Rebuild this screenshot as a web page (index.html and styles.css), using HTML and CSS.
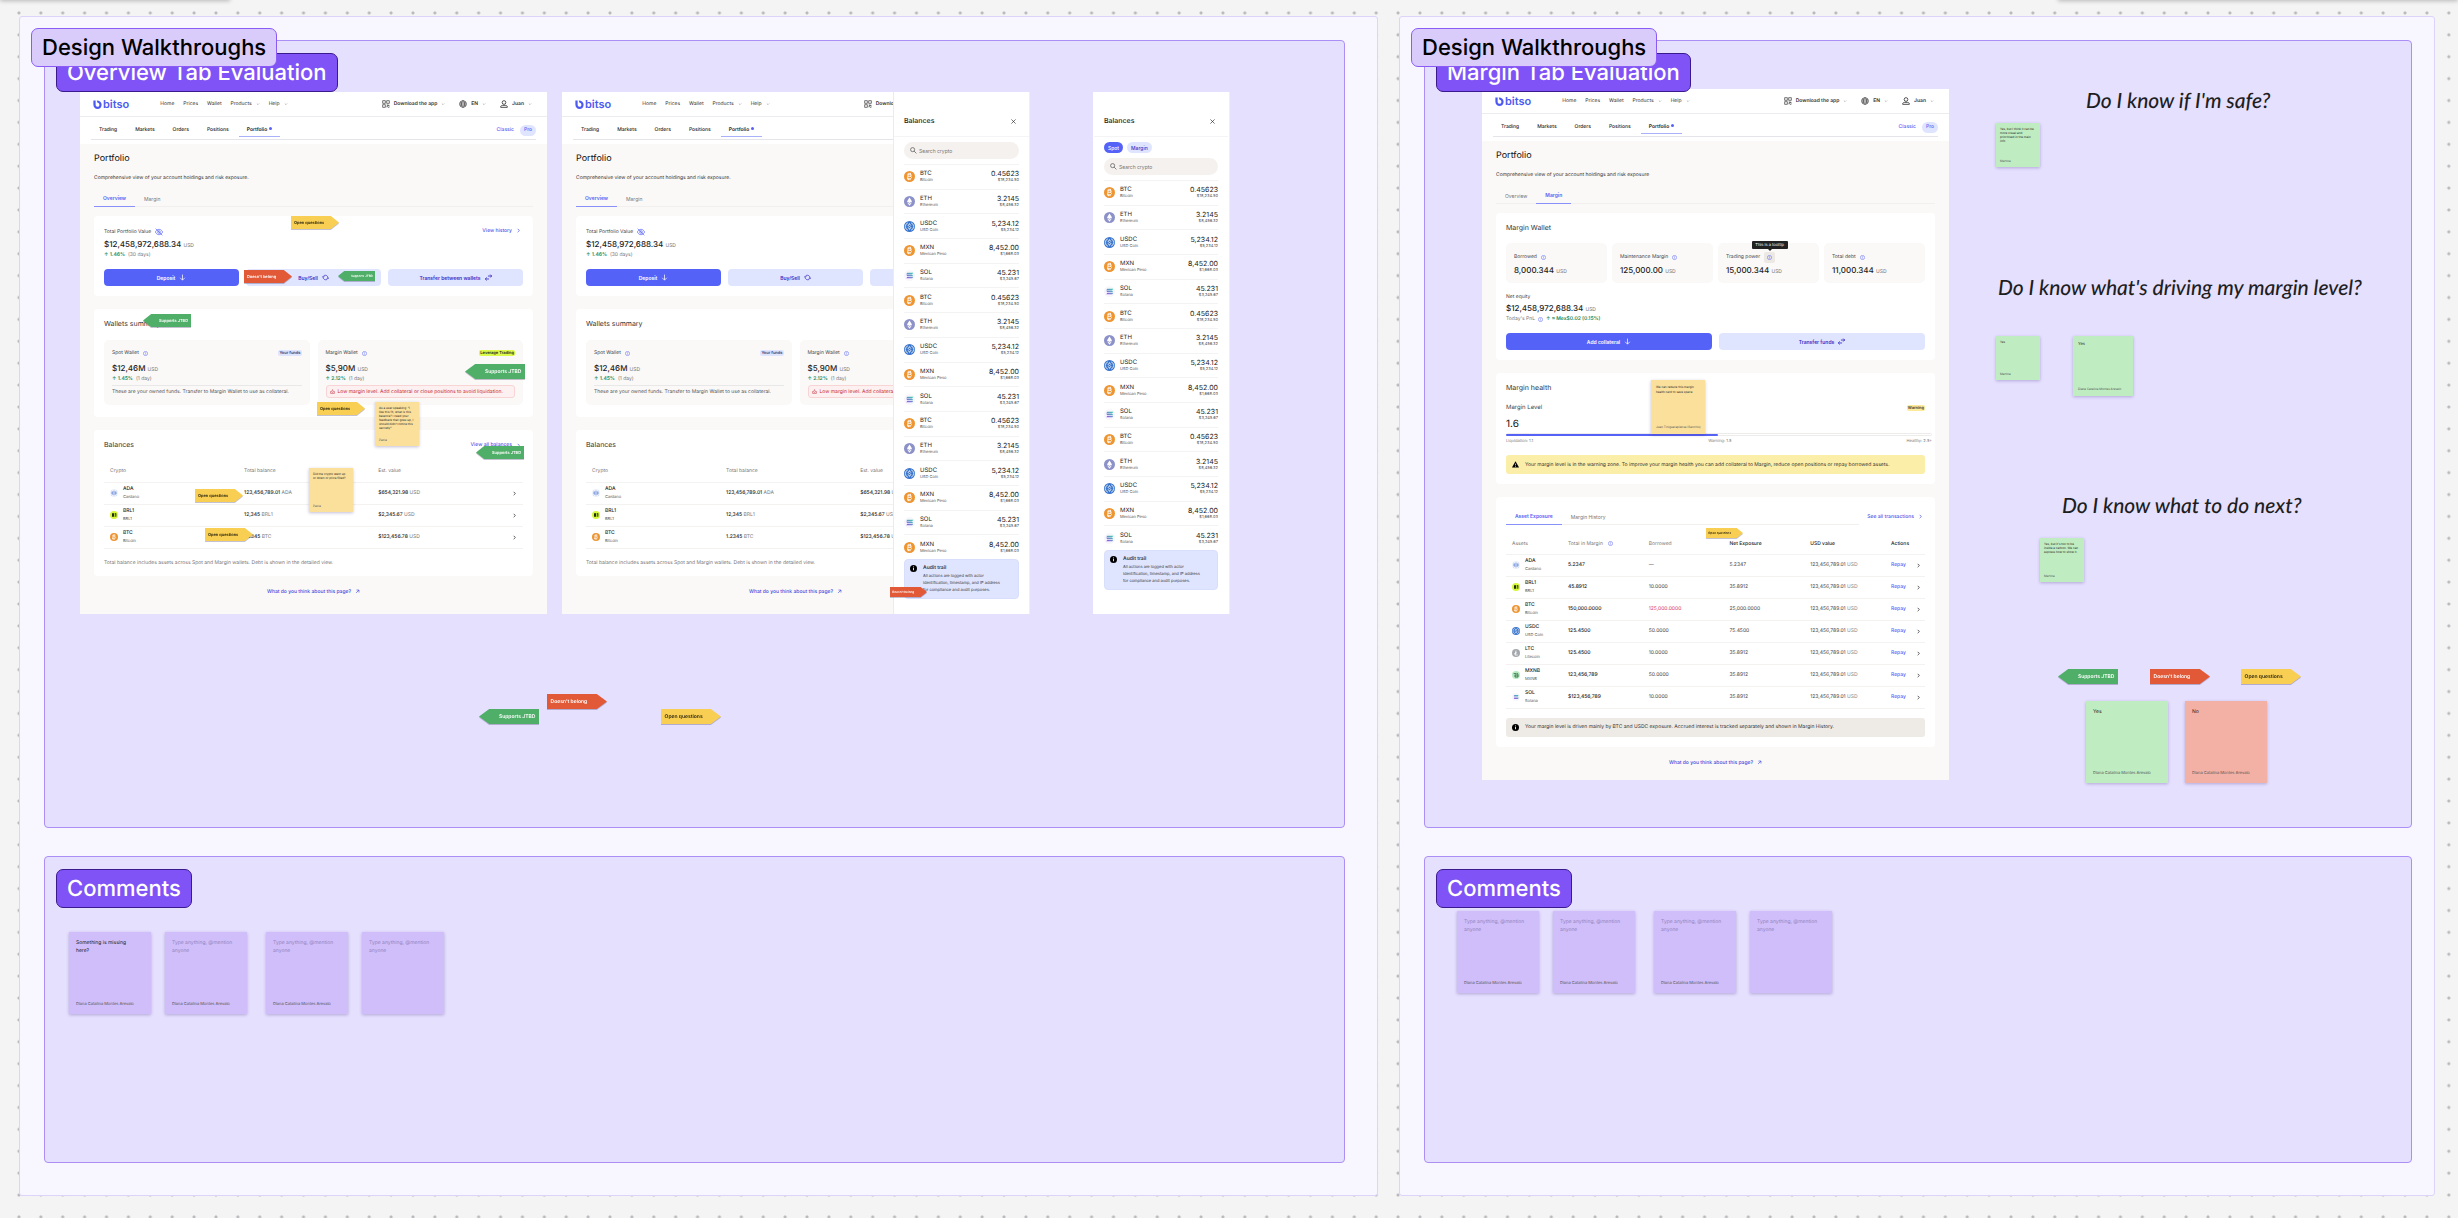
FILE: index.html
```html
<!DOCTYPE html>
<html lang="en">
<head>
    <meta charset="UTF-8">
    <meta name="viewport" content="width=device-width, initial-scale=1.0">
    <title>Design Walkthroughs</title>
    <link rel="stylesheet" href="styles.css">
</head>
<body>

    <!-- Icons -->
    <svg class="sprite" aria-hidden="true">
        <linearGradient id="solFill" x1="0" y1="1" x2="1" y2="0">
            <stop offset="0" stop-color="#a04bf0"/>
            <stop offset="1" stop-color="#35d6a5"/>
        </linearGradient>
        <symbol id="logo" viewBox="0 0 24 24">
            <path d="M1 1h6v11c0 4 2 6 5 6s5-2 5-5.500-2-5.500-5-5.500L10 1c8 0 13 4.500 13 11.500S18 24 12 24 1 19.500 1 12z" fill="#4c5af2"/>
        </symbol>
        <symbol id="qr" viewBox="0 0 24 24">
            <path d="M2 2h8v8H2zM14 2h8v8h-8zM2 14h8v8H2zM14 15h4v3h-3v4M20 14v4h3M18 22h4" fill="none" stroke="currentColor" stroke-width="2"/>
        </symbol>
        <symbol id="globe" viewBox="0 0 24 24">
            <g fill="none" stroke="currentColor" stroke-width="2"><circle cx="12" cy="12" r="10"/><ellipse cx="12" cy="12" rx="4.500" ry="10"/><path d="M2 9h20M2 15h20"/></g>
        </symbol>
        <symbol id="user" viewBox="0 0 24 24">
            <path d="M12 2a5 5 0 1 1 0 11 5 5 0 0 1 0-11zM2 22v-2c0-3 4-4 10-4s10 1 10 4v2z" fill="none" stroke="currentColor" stroke-width="2.500"/>
        </symbol>
        <symbol id="down" viewBox="0 0 24 24">
            <path d="M5 9l7 7 7-7" fill="none" stroke="currentColor" stroke-width="3"/>
        </symbol>
        <symbol id="right" viewBox="0 0 24 24">
            <path d="M8 4l8 8-8 8" fill="none" stroke="currentColor" stroke-width="3.500"/>
        </symbol>
        <symbol id="eye" viewBox="0 0 24 24">
            <path d="M1 12c3-6 7-8 11-8s8 2 11 8c-3 6-7 8-11 8S4 18 1 12zM12 8a4 4 0 1 1 0 8 4 4 0 0 1 0-8zM2 2l20 20" fill="none" stroke="currentColor" stroke-width="2"/>
        </symbol>
        <symbol id="info" viewBox="0 0 24 24">
            <path d="M12 2a10 10 0 1 1 0 20 10 10 0 0 1 0-20zM12 11v6M12 6v3" fill="none" stroke="currentColor" stroke-width="2.500"/>
        </symbol>
        <symbol id="info-solid" viewBox="0 0 24 24">
            <circle cx="12" cy="12" r="12"/><path d="M12 10v8M12 5v3" stroke="#fff" stroke-width="3"/>
        </symbol>
        <symbol id="warn-solid" viewBox="0 0 24 24">
            <path d="M12 1l12 21H0z"/><path d="M12 9v6M12 17v3" stroke="#fbeea8" stroke-width="2.500"/>
        </symbol>
        <symbol id="alert" viewBox="0 0 24 24">
            <path d="M3 21V12h4c0-7 10-7 10 0h4v9zM12 1v3M12 13v5" fill="none" stroke="currentColor" stroke-width="2.500"/>
        </symbol>
        <symbol id="arrow-down" viewBox="0 0 24 24">
            <path d="M12 2v19M4 13l8 8 8-8" fill="none" stroke="currentColor" stroke-width="2.500"/>
        </symbol>
        <symbol id="arrow-out" viewBox="0 0 24 24">
            <path d="M5 19L19 5M7 5h12v12" fill="none" stroke="currentColor" stroke-width="3"/>
        </symbol>
        <symbol id="cycle" viewBox="0 0 24 24">
            <path d="M4 11c0-9 14-9 16 0M20 13c0 9-14 9-16 0M0 8l4 4 4-4M16 16l4-4 4 4" fill="none" stroke="currentColor" stroke-width="2.500"/>
        </symbol>
        <symbol id="swap" viewBox="0 0 24 24">
            <path d="M10 7h13M18 2l5 5-5 5M14 17H1M6 12l-5 5 5 5" fill="none" stroke="currentColor" stroke-width="3"/>
        </symbol>
        <symbol id="search" viewBox="0 0 24 24">
            <path d="M9 2a7 7 0 1 1 0 14A7 7 0 0 1 9 2zM14 14l8 8" fill="none" stroke="currentColor" stroke-width="2.500"/>
        </symbol>
        <symbol id="close" viewBox="0 0 24 24">
            <path d="M2 2l20 20M22 2L2 22" fill="none" stroke="currentColor" stroke-width="3"/>
        </symbol>
        <symbol id="btc" viewBox="0 0 24 24">
            <circle cx="12" cy="12" r="12" fill="#ee9430"/>
            <path d="M9 6l-1 12M8 7h5c4 0 4 4 0 4.500H9M13 11.500c5 0 4 5.500 0 5.500H7M11 4v3M14 4v3M10 17v3M13 17v3" fill="none" stroke="#fff" stroke-width="2"/>
        </symbol>
        <symbol id="eth" viewBox="0 0 24 24">
            <circle cx="12" cy="12" r="12" fill="#8c92c9"/>
            <path d="M12 3l5.500 9L12 15.500 6.500 12zM12 17l5.500-3.500L12 21l-5.500-7.500z" fill="#fff"/>
        </symbol>
        <symbol id="usdc" viewBox="0 0 24 24">
            <circle cx="12" cy="12" r="12" fill="#3b76cc"/>
            <path d="M8.500 4a8.500 8.500 0 0 0 0 16M15.500 4a8.500 8.500 0 0 1 0 16M15 10c0-3.500-6-3.500-6-.5s6 2 6 5-6 3-6-.5M12 5v2M12 17v2" fill="none" stroke="#fff" stroke-width="1.600"/>
        </symbol>
        <symbol id="sol" viewBox="0 0 24 24">
            <circle cx="12" cy="12" r="12" fill="#f7f7fb"/>
            <path d="M7 6h13l-2 3H5zM5 10.500h13l2 3H7zM7 15h13l-2 3H5z" fill="url(#solFill)"/>
        </symbol>
        <symbol id="ada" viewBox="0 0 24 24">
            <circle cx="12" cy="12" r="12" fill="#eef3fc"/>
            <g fill="#4a72cf"><circle cx="9" cy="9" r="2"/><circle cx="15" cy="9" r="2"/><circle cx="9" cy="15" r="2"/><circle cx="15" cy="15" r="2"/><circle cx="6" cy="12" r="2"/><circle cx="18" cy="12" r="2"/><circle cx="12" cy="3.500" r="1"/><circle cx="12" cy="20.500" r="1"/><circle cx="5" cy="6" r="1"/><circle cx="19" cy="6" r="1"/><circle cx="5" cy="18" r="1"/><circle cx="19" cy="18" r="1"/></g>
        </symbol>
        <symbol id="brl1" viewBox="0 0 24 24">
            <circle cx="12" cy="12" r="12" fill="#d6f838"/>
            <path d="M6 7h7v3l-1 2 1 2v3H6zM15 7h4v10h-3V10h-1z" fill="#1d2b10"/>
        </symbol>
        <symbol id="ltc" viewBox="0 0 24 24">
            <circle cx="12" cy="12" r="12" fill="#a5a8ad"/>
            <path d="M12 5l-3 13h8M7 14l8-3" fill="none" stroke="#fff" stroke-width="2.500"/>
        </symbol>
        <symbol id="mxnb" viewBox="0 0 24 24">
            <circle cx="12" cy="12" r="12" fill="#b7ecc0"/>
            <path d="M5 8h8M9 12h9v6H9zM14 7c3 0 4 1 4 4" fill="none" stroke="#2d5a3c" stroke-width="2.500"/>
        </symbol>
    </svg>

    <!-- Header shared by every mocked page -->
    <template id="headerTemplate">
        <header class="topbar">
            <a class="logo" href="#"><svg><use href="#logo"/></svg>bitso</a>
            <nav class="topnav">
                <a href="#">Home</a>
                <a href="#">Prices</a>
                <a href="#">Wallet</a>
                <a href="#">Products <svg class="ic-xs"><use href="#down"/></svg></a>
                <a href="#">Help <svg class="ic-xs"><use href="#down"/></svg></a>
            </nav>
            <div class="account">
                <a href="#"><svg class="ic-lg"><use href="#qr"/></svg>Download the app <svg class="ic-xs"><use href="#down"/></svg></a>
                <a href="#"><svg class="ic-lg"><use href="#globe"/></svg>EN <svg class="ic-xs"><use href="#down"/></svg></a>
                <a href="#"><svg class="ic-lg"><use href="#user"/></svg>Juan <svg class="ic-xs"><use href="#down"/></svg></a>
            </div>
        </header>
        <div class="subnav">
            <nav>
                <a href="#">Trading</a>
                <a href="#">Markets</a>
                <a href="#">Orders</a>
                <a href="#">Positions</a>
                <a href="#" class="current">Portfolio</a>
                <a href="#" class="mode">Classic</a>
                <a href="#" class="mode pill">Pro</a>
            </nav>
        </div>
    </template>

    <template id="overviewTemplate">
        <main class="content">
            <h1>Portfolio</h1>
            <p class="lead">Comprehensive view of your account holdings and risk exposure.</p>
            <div class="tabs">
                <button class="tab active">Overview</button>
                <button class="tab">Margin</button>
            </div>

            <section class="card total">
                <div class="row">
                    <span class="label">Total Portfolio Value <svg class="ic-lg blue"><use href="#eye"/></svg></span>
                    <a class="more" href="#">View history <svg class="ic-sm"><use href="#right"/></svg></a>
                </div>
                <p class="amount">$12,458,972,688.34 <small>USD</small></p>
                <p class="change"><b>↑ 1.46%</b> (30 days)</p>
                <div class="actions">
                    <button class="btn primary">Deposit <svg class="ic-md"><use href="#arrow-down"/></svg></button>
                    <button class="btn">Buy/Sell <svg class="ic-md"><use href="#cycle"/></svg></button>
                    <button class="btn">Transfer between wallets <svg class="ic-md"><use href="#swap"/></svg></button>
                </div>
            </section>

            <section class="card">
                <h2>Wallets summary</h2>
                <div class="wallets">
                    <div class="wallet">
                        <div class="row">
                            <span class="label">Spot Wallet <svg class="ic-sm blue"><use href="#info"/></svg></span>
                            <span class="chip">Your funds</span>
                        </div>
                        <p class="amount">$12,46M <small>USD</small></p>
                        <p class="change"><b>↑ 1.45%</b> (1 day)</p>
                        <p class="hint">These are your owned funds. Transfer to Margin Wallet to use as collateral.</p>
                    </div>
                    <div class="wallet">
                        <div class="row">
                            <span class="label">Margin Wallet <svg class="ic-sm blue"><use href="#info"/></svg></span>
                            <span class="chip lime">Leverage Trading</span>
                        </div>
                        <p class="amount">$5,90M <small>USD</small></p>
                        <p class="change"><b>↑ 2.12%</b> (1 day)</p>
                        <p class="danger"><svg class="ic-sm"><use href="#alert"/></svg>Low margin level. Add collateral or close positions to avoid liquidation.</p>
                    </div>
                </div>
            </section>

            <section class="card balances">
                <div class="row">
                    <h2>Balances</h2>
                    <a class="more" href="#">View all balances <svg class="ic-sm"><use href="#right"/></svg></a>
                </div>
                <table class="holdings">
                    <thead>
                        <tr><th>Crypto</th><th>Total balance</th><th>Est. value</th><th></th></tr>
                    </thead>
                    <tbody>
                        <tr>
                            <td><div class="asset"><svg><use href="#ada"/></svg><span>ADA<small>Cardano</small></span></div></td>
                            <td><b>123,456,789.01</b> ADA</td>
                            <td><b>$654,321.98</b> USD</td>
                            <td><svg class="ic-sm"><use href="#right"/></svg></td>
                        </tr>
                        <tr>
                            <td><div class="asset"><svg><use href="#brl1"/></svg><span>BRL1<small>BRL1</small></span></div></td>
                            <td><b>12,345</b> BRL1</td>
                            <td><b>$2,345.67</b> USD</td>
                            <td><svg class="ic-sm"><use href="#right"/></svg></td>
                        </tr>
                        <tr>
                            <td><div class="asset"><svg><use href="#btc"/></svg><span>BTC<small>Bitcoin</small></span></div></td>
                            <td><b>1.2345</b> BTC</td>
                            <td><b>$123,456.78</b> USD</td>
                            <td><svg class="ic-sm"><use href="#right"/></svg></td>
                        </tr>
                    </tbody>
                </table>
                <p class="footnote">Total balance includes assets across Spot and Margin wallets. Debt is shown in the detailed view.</p>
            </section>
            <a class="feedback" href="#">What do you think about this page? <svg class="ic-sm"><use href="#arrow-out"/></svg></a>
        </main>
    </template>

    <template id="drawerTemplate">
        <div class="drawer-head">
            <h2>Balances</h2>
            <button aria-label="Close"><svg class="ic-sm"><use href="#close"/></svg></button>
        </div>
        <div class="filters">
            <button class="active">Spot</button>
            <button>Margin</button>
        </div>
        <label class="search"><svg class="ic-md"><use href="#search"/></svg><input type="text" placeholder="Search crypto" aria-label="Search crypto"></label>
        <ul class="coins"></ul>
        <div class="audit">
            <svg class="ic-md"><use href="#info-solid"/></svg>
            <p><b>Audit trail</b>All actions are logged with actor<br>identification, timestamp, and IP address<br>for compliance and audit purposes.</p>
        </div>
    </template>

    <div class="toolbar-shadow left"></div>
    <div class="toolbar-shadow right"></div>

    <div class="canvas">
        <section class="frame">
            <h2 class="title">Design Walkthroughs</h2>
            <div class="board" data-notes="overview">
                <h3 class="heading">Overview Tab Evaluation</h3>
                <article class="screen first" data-page="overview"></article>
                <article class="screen second" data-page="overview"></article>
                <aside class="drawer over" data-coins="16"></aside>
                <aside class="drawer alone" data-coins="15"></aside>
            </div>
            <div class="board" data-notes="overviewComments">
                <h3 class="heading">Comments</h3>
            </div>
        </section>

        <section class="frame">
            <h2 class="title">Design Walkthroughs</h2>
            <div class="board" data-notes="margin">
                <h3 class="heading">Margin Tab Evaluation</h3>
                <article class="screen margin" data-page="margin">
                    <main class="content">
                        <h1>Portfolio</h1>
                        <p class="lead">Comprehensive view of your account holdings and risk exposure</p>
                        <div class="tabs">
                            <button class="tab">Overview</button>
                            <button class="tab active">Margin</button>
                        </div>

                        <section class="card wallet-card">
                            <h2>Margin Wallet</h2>
                            <div class="stats">
                                <div class="stat">
                                    <span class="label">Borrowed <svg class="ic-sm blue"><use href="#info"/></svg></span>
                                    <p class="amount">8,000.344 <small>USD</small></p>
                                </div>
                                <div class="stat">
                                    <span class="label">Maintenance Margin <svg class="ic-sm blue"><use href="#info"/></svg></span>
                                    <p class="amount">125,000.00 <small>USD</small></p>
                                </div>
                                <div class="stat">
                                    <span class="label">Trading power <span class="hovered"><svg class="ic-sm blue"><use href="#info"/></svg><span class="tooltip">This is a tooltip</span></span></span>
                                    <p class="amount">15,000.344 <small>USD</small></p>
                                </div>
                                <div class="stat">
                                    <span class="label">Total debt <svg class="ic-sm blue"><use href="#info"/></svg></span>
                                    <p class="amount">11,000.344 <small>USD</small></p>
                                </div>
                            </div>
                            <p class="label equity">Net equity</p>
                            <p class="amount tight">$12,458,972,688.34 <small>USD</small></p>
                            <p class="change">Today's PnL <svg class="ic-sm blue"><use href="#info"/></svg> <b>↑ ≈ Mex$0.02 (0.15%)</b></p>
                            <div class="actions">
                                <button class="btn primary">Add collateral <svg class="ic-md"><use href="#arrow-down"/></svg></button>
                                <button class="btn">Transfer funds <svg class="ic-md"><use href="#swap"/></svg></button>
                            </div>
                        </section>

                        <section class="card health">
                            <h2>Margin health</h2>
                            <div class="row level">
                                <span>Margin Level</span>
                                <span class="chip yellow">Warning</span>
                            </div>
                            <p class="ratio">1.6</p>
                            <div class="meter"><div class="fill"></div></div>
                            <div class="scale"><span>Liquidation: 1.1</span><span>Warning: 1.5</span><span>Healthy: 2.5+</span></div>
                            <p class="notice yellow"><svg class="ic-md"><use href="#warn-solid"/></svg>Your margin level is in the warning zone. To improve your margin health you can add collateral to Margin, reduce open positions or repay borrowed assets.</p>
                        </section>

                        <section class="card exposure">
                            <div class="exposure-head">
                                <div class="tabs">
                                    <button class="tab active">Asset Exposure</button>
                                    <button class="tab">Margin History</button>
                                </div>
                                <a class="more" href="#">See all transactions <svg class="ic-sm"><use href="#right"/></svg></a>
                            </div>
                            <table class="positions">
                                <thead>
                                    <tr><th>Assets</th><th>Total in Margin <svg class="ic-sm blue"><use href="#info"/></svg></th><th>Borrowed</th><th class="dark">Net Exposure</th><th class="dark">USD value</th><th class="dark">Actions</th><th></th></tr>
                                </thead>
                                <tbody id="positions"></tbody>
                            </table>
                            <p class="notice"><svg class="ic-md"><use href="#info-solid"/></svg>Your margin level is driven mainly by BTC and USDC exposure. Accrued interest is tracked separately and shown in Margin History.</p>
                        </section>
                        <a class="feedback" href="#">What do you think about this page? <svg class="ic-sm"><use href="#arrow-out"/></svg></a>
                    </main>
                </article>
                <p class="question safe">Do I know if I'm safe?</p>
                <p class="question driving">Do I know what's driving my margin level?</p>
                <p class="question next">Do I know what to do next?</p>
            </div>
            <div class="board" data-notes="marginComments">
                <h3 class="heading">Comments</h3>
            </div>
        </section>
    </div>

    <script src="board.js"></script>
</body>
</html>
```

FILE: styles.css
```css
* {
    box-sizing: border-box;
}

body {
    margin: 0;
    font-family: 'Inter', sans-serif;
    text-rendering: geometricPrecision;
    background-color: #f4f4f4;
    background-image: radial-gradient(circle, #b9b9bd 1px, transparent 2px);
    background-size: 0.891% 1.798%;
    background-position: 8px 2px;
    background-attachment: fixed;
}

h1, h2, h3, p, ul {
    margin: 0;
    padding: 0;
    font-weight: 400;
}

a {
    color: inherit;
    text-decoration: none;
}

button, input {
    font: inherit;
    color: inherit;
    border: 0;
    padding: 0;
    margin: 0;
    background: none;
}

svg {
    display: block;
    flex: none;
}

.sprite {
    position: absolute;
    width: 0;
    height: 0;
}

.ic-xs { width: 4px; height: 4px; color: #888; }
.ic-sm { width: 5px; height: 5px; }
.ic-md { width: 7px; height: 7px; }
.ic-lg { width: 8px; height: 8px; }
.blue { color: #5562f5; }

.toolbar-shadow {
    position: absolute;
    top: -10px;
    height: 10px;
    box-shadow: 0 1px 4px rgba(0, 0, 0, .25);
}

.toolbar-shadow.left { left: 0; width: 230px; }
.toolbar-shadow.right { right: 0; width: 400px; }

/* Canvas */

.canvas {
    display: grid;
    grid-template-columns: 1359fr 1036fr;
    gap: 21px;
    min-height: 100vh;
    padding: 16px 23px 22px 19px;
}

.frame {
    position: relative;
    display: grid;
    grid-template-rows: 788fr 307fr;
    gap: 28px;
    padding: 23px 32px 32px 24px;
    border: 1px solid #ddd3fb;
    border-radius: 3px;
    background: #f8f6ff;
}

.frame + .frame {
    padding-right: 22px;
}

.board {
    position: relative;
    border: 1px solid #ab8ff5;
    border-radius: 4px;
    background: #e6e0ff;
}

.title, .heading {
    position: absolute;
    height: 39px;
    padding: 0 10px;
    border: 1px solid #3a1a8c;
    border-radius: 7px;
    font-size: 22px;
    line-height: 38px;
    font-weight: 500;
    white-space: nowrap;
    color: #fff;
    background: #8053f7;
}

.title {
    left: 11px;
    top: 11px;
    z-index: 3;
    color: #000;
    border-color: #8a5cf5;
    background: #d9ccfb;
}

.heading {
    left: 11px;
    top: 12px;
    z-index: 2;
}

.question {
    position: absolute;
    font: italic 500 21px/24px 'Lato', sans-serif;
    color: #1e1e1e;
    white-space: nowrap;
}

.question.safe { left: 661px; top: 48px; }
.question.driving { left: 573px; top: 235px; }
.question.next { left: 637px; top: 453px; }

/* Mocked pages */

.screen, .drawer {
    position: absolute;
    overflow: hidden;
    font-size: 5px;
    line-height: 6px;
    color: #333;
}

.screen {
    width: 467px;
    height: 522px;
    background: #faf9f7;
}

.screen.first { left: 35px; top: 51px; }
.screen.second { left: 517px; top: 51px; }
.screen.margin { left: 57px; top: 48px; height: 691px; }

.topbar {
    display: flex;
    align-items: center;
    height: 25px;
    padding: 0 15px 0 13px;
    border-bottom: 1px solid #ececee;
    background: #fff;
}

.logo {
    display: flex;
    align-items: center;
    gap: 1px;
    font-size: 11px;
    line-height: 12px;
    font-weight: 600;
    color: #4c5af2;
}

.logo svg {
    width: 9px;
    height: 9px;
}

.topnav, .account {
    display: flex;
    gap: 9px;
}

.topnav {
    margin-left: 31px;
}

.account {
    margin-left: auto;
    gap: 14px;
    font-weight: 600;
}

.topnav a, .account a {
    display: flex;
    align-items: center;
    gap: 4px;
}

.subnav {
    height: 27px;
    padding: 0 11px;
    background: #fff;
}

.subnav nav {
    display: flex;
    align-items: center;
    gap: 18px;
    height: 23px;
    padding: 4px 0 0 8px;
    border-bottom: 1px solid #e4e4ea;
    font-weight: 500;
    color: #222;
}

.subnav .current {
    position: relative;
    align-self: stretch;
    margin: 0 -8px;
    padding: 6px 8px 0;
    border-bottom: 1px solid #a9b1fb;
    margin-bottom: 2px;
    font-weight: 600;
}

.subnav .current::after {
    content: '';
    display: inline-block;
    width: 3px;
    height: 3px;
    margin-left: 2px;
    border-radius: 50%;
    background: #5562f5;
    vertical-align: 1px;
}

.mode {
    color: #5562f5;
}

.current + .mode {
    margin-left: auto;
}

.pill {
    margin-left: -12px;
    padding: 2px 4px 3px;
    border-radius: 6px;
    background: #e0e5ff;
}

.content {
    padding: 8px 14px 0;
}

h1 {
    font-size: 9px;
    line-height: 14px;
    color: #111;
}

.content h2 {
    font-size: 7px;
    line-height: 10px;
    color: #333;
}

.lead {
    margin-top: 9px;
}

.tabs {
    display: flex;
    height: 17px;
    margin-top: 9px;
    border-bottom: 1px solid #f1f0ee;
}

.tab {
    height: 17px;
    padding: 0 9px;
    color: #777;
}

.tab.active {
    border-bottom: 1px solid #8891f9;
    font-weight: 600;
    color: #5562f5;
}

.card {
    margin-top: 13px;
    padding: 10px 10px 12px;
    border-radius: 4px;
    background: #fff;
}

.tabs + .card {
    margin-top: 9px;
}

.card.total {
    padding: 13px 10px 10px;
}

.card.balances, .card.wallet-card, .card.health {
    padding-bottom: 10px;
}

.row {
    display: flex;
    align-items: center;
    justify-content: space-between;
    height: 6px;
}

.balances .row {
    height: 10px;
}

.label, .more {
    display: flex;
    align-items: center;
    gap: 4px;
    color: #444;
}

.more {
    margin-right: 2px;
    font-weight: 500;
    color: #4c55e8;
}

.total .more {
    padding-bottom: 3px;
}

.amount {
    height: 10px;
    margin-top: 4px;
    font-size: 8px;
    line-height: 10px;
    font-weight: 500;
    color: #222;
}

.amount small {
    font-size: 5px;
    line-height: 5px;
    font-weight: 400;
    color: #777;
}

.change {
    display: flex;
    align-items: center;
    gap: 3px;
    height: 6px;
    margin-top: 3px;
    color: #777;
}

.change b {
    font-weight: 600;
    color: #1c8a5a;
}

.actions {
    display: flex;
    gap: 7px;
    margin-top: 11px;
}

.btn {
    flex: 1;
    display: flex;
    align-items: center;
    justify-content: center;
    gap: 4px;
    height: 17px;
    border-radius: 4px;
    font-weight: 600;
    color: #3a2fc4;
    background: #e0e5ff;
}

.btn.primary {
    color: #fff;
    background: #5562f8;
}

.wallets {
    display: flex;
    gap: 8px;
    margin-top: 11px;
}

.wallet {
    flex: 1;
    height: 65px;
    padding: 10px 8px 0;
    border-radius: 5px;
    background: #faf9f8;
}

.wallet .amount {
    margin-top: 7px;
}

.chip {
    padding: 0 1px;
    border-radius: 2px;
    font-size: 4px;
    line-height: 6px;
    font-weight: 600;
    color: #333a6a;
    background: #e0e5ff;
}

.chip.lime { background: #dcfa4a; color: #222; }
.chip.yellow { background: #fbeb9a; color: #333; }

.hint {
    margin-top: 3px;
    padding-top: 3px;
    border-top: 1px solid #e8e8e8;
    color: #555;
    white-space: nowrap;
}

.danger {
    display: flex;
    align-items: center;
    gap: 3px;
    height: 13px;
    margin-top: 3px;
    padding: 0 3px;
    border: 1px solid #f8d4d4;
    border-radius: 3px;
    color: #c5283a;
    background: #fdf0f0;
    white-space: nowrap;
}

table {
    width: 100%;
    border-collapse: collapse;
    table-layout: fixed;
}

th, td {
    height: 22px;
    padding: 0 0 0 6px;
    border-bottom: 1px solid #f3f2f1;
    font-weight: 400;
    text-align: left;
    color: #777;
}

.positions th .ic-sm {
    display: inline-block;
    margin-left: 4px;
    vertical-align: -1px;
}

td svg.ic-sm {
    color: #222;
}

td b {
    font-weight: 500;
    color: #222;
}

.holdings {
    margin-top: 10px;
}

.holdings th { width: 32%; }
.holdings th:last-child { width: 4%; }
.holdings td:last-child { padding-left: 6px; }

.asset {
    display: flex;
    align-items: center;
    gap: 5px;
    font-weight: 500;
    color: #222;
}

.asset svg {
    width: 8px;
    height: 8px;
}

.asset small {
    display: block;
    margin-top: 2px;
    font-size: 4px;
    line-height: 6px;
    font-weight: 400;
    color: #555;
}

.footnote {
    margin-top: 11px;
    color: #777;
}

.feedback {
    display: flex;
    align-items: center;
    justify-content: center;
    gap: 4px;
    margin-top: 13px;
    font-weight: 500;
    color: #4048e0;
}

/* Margin page */

.stats {
    display: flex;
    gap: 5px;
    margin-top: 10px;
}

.stat {
    flex: 1;
    height: 40px;
    padding: 11px 8px 0;
    border-radius: 5px;
    background: #faf9f8;
}

.stat .label {
    height: 6px;
}

.stat .amount {
    margin-top: 5px;
}

.hovered {
    position: relative;
    padding: 3px;
    border-radius: 2px;
    background: #ece8e3;
}

.tooltip {
    position: absolute;
    left: 50%;
    bottom: 14px;
    width: 36px;
    margin-left: -18px;
    border-radius: 1px;
    font-size: 4px;
    line-height: 8px;
    text-align: center;
    color: #fff;
    background: #222;
}

.tooltip::after {
    content: '';
    position: absolute;
    left: 50%;
    top: 100%;
    margin-left: -2px;
    border: 2px solid transparent;
    border-top-color: #222;
}

.equity {
    margin-top: 11px;
}

.amount.tight {
    margin-top: 3px;
}

.level {
    margin-top: 12px;
    color: #444;
}

.level > span:first-child {
    font-size: 6px;
}

.ratio {
    margin-top: 7px;
    font-size: 10px;
    line-height: 12px;
    color: #111;
}

.meter {
    height: 3px;
    margin: 3px -7px 0 0;
    border: 1px solid #eeecea;
    border-radius: 2px;
}

.meter .fill {
    width: 50%;
    height: 2px;
    margin: 0 -1px;
    border-radius: 1px;
    background: #5562f5;
}

.scale {
    display: flex;
    justify-content: space-between;
    margin: 2px -7px 0 0;
    font-size: 4px;
    color: #777;
}

.notice {
    display: flex;
    align-items: center;
    gap: 6px;
    height: 19px;
    margin-top: 11px;
    padding: 0 6px;
    border-radius: 3px;
    color: #333;
    background: #eeeae5;
    white-space: nowrap;
}

.notice svg {
    color: #000;
}

.notice.yellow {
    background: #fbeea8;
}

.exposure .tabs {
    flex: 1;
    margin-top: 0;
}

.exposure-head {
    display: flex;
    align-items: center;
    gap: 8px;
}

.card.exposure {
    padding-top: 11px;
    padding-bottom: 10px;
}

.positions th:first-child { width: 56px; }
.positions th:last-child { width: 13px; }
.positions th:nth-child(6) { width: 27px; }
.positions td:last-child { padding-left: 4px; }
.positions thead th { height: 29px; padding-top: 10px; }
.positions .dark { font-weight: 500; color: #222; }
.positions td a { font-weight: 500; color: #5562f5; }
.positions .over { color: #d83a6a; }
.positions td { color: #444; }
.positions td .unit { color: #888; }
.positions + .notice { margin-top: 9px; }

/* Balances drawer */

.drawer {
    display: flex;
    flex-direction: column;
    width: 137px;
    height: 522px;
    padding: 0 11px;
    background: #fff;
    border-right: 1px solid #efedf8;
}

.drawer.over {
    left: 848px;
    top: 51px;
    padding: 0 10px 15px;
    border-left: 1px solid #eceaf0;
}

.drawer.alone {
    left: 1048px;
    top: 51px;
    padding-bottom: 24px;
}

.drawer-head {
    display: flex;
    align-items: center;
    justify-content: space-between;
    height: 45px;
    margin: 0 -10px;
    padding: 14px 13px 0 10px;
    border-bottom: 1px solid #f4f4f6;
    color: #222;
}

.drawer-head h2 {
    font-size: 7px;
    line-height: 10px;
    font-weight: 500;
}

.filters {
    display: none;
}

.alone .filters {
    display: flex;
    gap: 4px;
    margin-top: 5px;
}

.filters button {
    height: 11px;
    padding: 0 4px;
    border-radius: 6px;
    font-weight: 500;
    color: #3a2fc4;
    background: #e0e5ff;
}

.filters .active {
    color: #fff;
    background: #5562f8;
}

.search {
    display: flex;
    align-items: center;
    gap: 2px;
    height: 17px;
    margin-top: 5px;
    padding-left: 6px;
    border-radius: 9px;
    color: #555;
    background: #f5f1ef;
}

.search input {
    flex: 1;
    min-width: 0;
    height: 10px;
}

.search input::placeholder {
    color: #777;
}

.coins {
    flex: 1;
    display: flex;
    flex-direction: column;
    margin-top: 5px;
    list-style: none;
}

.coins li {
    flex: 1;
    display: flex;
    align-items: center;
    gap: 5px;
    border-top: 1px solid #f4f3f3;
    font-size: 6px;
    line-height: 7px;
    color: #222;
}

.coins svg {
    width: 11px;
    height: 11px;
}

.coins .worth {
    margin-left: auto;
    font-size: 7px;
    text-align: right;
}

.coins small {
    display: block;
    font-size: 4px;
    line-height: 6px;
    color: #555;
}

.audit {
    display: flex;
    gap: 6px;
    height: 40px;
    padding: 5px;
    border: 1px solid #d8dffc;
    border-radius: 4px;
    color: #333;
    background: #e0e5ff;
}

.audit svg {
    color: #000;
}

.audit p {
    font-size: 4px;
    line-height: 7px;
    white-space: nowrap;
}

.audit b {
    display: block;
    font-size: 5px;
    font-weight: 600;
}

/* Stickers and notes */

.tag {
    position: absolute;
    z-index: 2;
    display: flex;
    align-items: center;
    font-weight: 600;
    white-space: nowrap;
    filter: drop-shadow(0 1px 0 rgba(60, 50, 100, .3));
}

.tag span {
    flex: 1;
    height: 100%;
    display: flex;
    align-items: center;
    clip-path: polygon(0 0, 83% 0, 100% 50%, 83% 100%, 0 100%);
}

.tag.open span { background: #f8cf52; color: #2a2410; padding-left: 6%; }
.tag.no span { background: #e25938; color: #fff; padding-left: 6%; }
.tag.yes span {
    justify-content: flex-end;
    padding-right: 6%;
    color: #fff;
    background: #4fae68;
    clip-path: polygon(17% 0, 100% 0, 100% 100%, 17% 100%, 0 50%);
}

.tag.lg { width: 60px; height: 15px; font-size: 5px; }
.tag.md { width: 48px; height: 13px; font-size: 4px; }
.tag.sm { width: 37px; height: 10px; font-size: 3px; }

.note {
    position: absolute;
    z-index: 1;
    display: flex;
    flex-direction: column;
    justify-content: space-between;
    font-weight: 500;
    color: #222;
    background: #bfecc1;
    box-shadow: 0 1px 3px rgba(60, 40, 120, .3);
}

.note small {
    font-weight: 400;
    color: #555;
    white-space: nowrap;
}

.note.s { width: 44px; height: 44px; padding: 4px; font-size: 3px; line-height: 4px; }
.note.m { width: 54px; height: 54px; padding: 5px; font-size: 3px; line-height: 5px; }
.note.l { width: 60px; height: 60px; padding: 5px; font-size: 4px; line-height: 6px; }
.note.xl { width: 82px; height: 82px; padding: 7px 12px 7px 7px; font-size: 5px; line-height: 8px; }
.note.s small, .note.m small, .note.l small { font-size: 3px; line-height: 4px; }
.note.xl small { font-size: 4px; line-height: 6px; }
.note.sand { background: #fbe09c; }
.note.coral { background: #f3b1a6; }
.note.lilac { background: #cfbefa; }
.note.empty p { color: #9585bf; font-weight: 400; }
```

FILE: board.js
```js
var coins = [
    ['btc', 'BTC', 'Bitcoin', '0.45623', '$18,234.50'],
    ['eth', 'ETH', 'Ethereum', '3.2145', '$8,456.32'],
    ['usdc', 'USDC', 'USD Coin', '5,234.12', '$5,234.12'],
    ['btc', 'MXN', 'Mexican Peso', '8,452.00', '$1,668.03'],
    ['sol', 'SOL', 'Solana', '45.231', '$3,245.67']
];

var positions = [
    ['ada', 'ADA', 'Cardano', '5.2347', '—', '5.2347'],
    ['brl1', 'BRL1', 'BRL1', '45.8912', '10.0000', '35.8912'],
    ['btc', 'BTC', 'Bitcoin', '150,000.0000', '125,000.0000', '25,000.0000'],
    ['usdc', 'USDC', 'USD Coin', '125.4500', '50.0000', '75.4500'],
    ['ltc', 'LTC', 'Litecoin', '125.4500', '10.0000', '35.8912'],
    ['mxnb', 'MXNB', 'MXNB', '123,456,789', '50.0000', '35.8912'],
    ['sol', 'SOL', 'Solana', '$123,456,789', '10.0000', '35.8912']
];

var labels = { yes: 'Supports JTBD', no: "Doesn't belong", open: 'Open questions' };
var author = 'Diana Catalina Montes Arevalo';
var empty = 'Type anything, @mention anyone';

// Tags: kind, size, x, y
var tags = {
    overview: [
        ['open', 'md', 246, 175], ['no', 'md', 199, 229], ['yes', 'sm', 293, 230],
        ['yes', 'md', 98, 273], ['yes', 'lg', 420, 323], ['open', 'md', 272, 361],
        ['yes', 'md', 431, 405], ['open', 'md', 150, 448], ['open', 'md', 160, 487],
        ['no', 'sm', 845, 546], ['no', 'lg', 502, 653], ['yes', 'lg', 434, 668],
        ['open', 'lg', 616, 668]
    ],
    margin: [
        ['open', 'sm', 281, 487], ['yes', 'lg', 633, 628], ['no', 'lg', 725, 628],
        ['open', 'lg', 816, 628]
    ]
};

// Notes: classes, x, y, text, signature
var notes = {
    overview: [
        ['s sand', 330, 361, 'As a user speaking: "I like this fit, what is this balance? I need your feedback that goes up, I should didn\'t notice this secretly"', 'Paola'],
        ['s sand', 264, 427, 'Did the crypto went up or down or price filled?', 'Paola']
    ],
    margin: [
        ['m sand', 226, 339, 'We can reduce this margin health card to save space', 'Juan Tiniguarapiensa (Sanchis)'],
        ['s', 571, 82, 'Yes, but I think it can be more visual and prioritised in the main info', 'Martina'],
        ['s', 571, 295, 'Yes', 'Martina'],
        ['l', 648, 295, 'Yes', author],
        ['s', 615, 497, 'Yes, but it\'s too to be inside a carbon. We can express how to show it.', 'Martina'],
        ['xl', 661, 660, 'Yes', author],
        ['xl coral', 760, 660, 'No', author]
    ],
    overviewComments: [
        ['xl lilac', 24, 75, 'Something is missing here?', author],
        ['xl lilac empty', 120, 75, empty, author],
        ['xl lilac empty', 221, 75, empty, author],
        ['xl lilac empty', 317, 75, empty, '']
    ],
    marginComments: [
        ['xl lilac empty', 32, 54, empty, author],
        ['xl lilac empty', 128, 54, empty, author],
        ['xl lilac empty', 229, 54, empty, author],
        ['xl lilac empty', 325, 54, empty, '']
    ]
};

function clone(id) {
    return document.getElementById(id).content.cloneNode(true);
}

function place(board, html, className, x, y) {
    var el = document.createElement('div');
    el.className = className;
    el.style.left = x + 'px';
    el.style.top = y + 'px';
    el.innerHTML = html;
    board.appendChild(el);
}

document.querySelectorAll('.screen').forEach(function (screen) {
    screen.prepend(clone('headerTemplate'));
    if (screen.dataset.page === 'overview') {
        screen.append(clone('overviewTemplate'));
    }
});

document.querySelectorAll('.drawer').forEach(function (drawer) {
    drawer.append(clone('drawerTemplate'));
    var rows = '';
    for (var i = 0; i < Number(drawer.dataset.coins); i++) {
        var c = i === 15 ? coins[3] : coins[i % 5];
        rows += '<li><svg><use href="#' + c[0] + '"/></svg><span>' + c[1] + '<small>' + c[2] +
            '</small></span><span class="worth">' + c[3] + '<small>' + c[4] + '</small></span></li>';
    }
    drawer.querySelector('.coins').innerHTML = rows;
});

document.getElementById('positions').innerHTML = positions.map(function (p) {
    var over = p[1] === 'BTC' ? ' class="over"' : '';
    return '<tr><td><div class="asset"><svg><use href="#' + p[0] + '"/></svg><span>' + p[1] + '<small>' + p[2] +
        '</small></span></div></td><td><b>' + p[3] + '</b></td><td' + over + '>' + p[4] + '</td><td>' + p[5] +
        '</td><td>123,456,789.01 <span class="unit">USD</span></td><td><a href="#">Repay</a></td>' +
        '<td><svg class="ic-sm"><use href="#right"/></svg></td></tr>';
}).join('');

document.querySelectorAll('.board').forEach(function (board) {
    var name = board.dataset.notes;
    (notes[name] || []).forEach(function (n) {
        place(board, '<p>' + n[3] + '</p><small>' + n[4] + '</small>', 'note ' + n[0], n[1], n[2]);
    });
    (tags[name] || []).forEach(function (t) {
        place(board, '<span>' + labels[t[0]] + '</span>', 'tag ' + t[0] + ' ' + t[1], t[2], t[3]);
    });
});
```
